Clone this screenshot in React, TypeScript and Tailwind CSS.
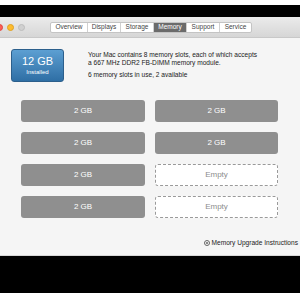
import React from "react";

const tabs = ["Overview", "Displays", "Storage", "Memory", "Support", "Service"];
const tabW = [36, 33, 33, 33, 33, 32];

function Slot({ filled }: { filled: boolean }) {
  return filled ? (
    <div className="h-[22px] rounded-[3px] bg-[#8f8f8f] flex items-center justify-center text-[8px] text-white">
      2 GB
    </div>
  ) : (
    <div className="h-[22px] rounded-[3px] bg-white border border-dashed border-[#9a9a9a] flex items-center justify-center text-[8px] text-[#8c8c8c]">
      Empty
    </div>
  );
}

export default function App() {
  const slots = [true, true, true, true, true, false, true, false];
  return (
    <div
      className="w-[300px] h-[300px] bg-white flex flex-col overflow-hidden"
      style={{ fontFamily: '"Liberation Sans", Arial, sans-serif' }}
    >
      <div className="h-[5px] bg-white" />
      <div className="h-[12px] bg-black" />
      <div className="h-[21px] bg-gradient-to-b from-[#ebebeb] to-[#d6d6d6] border-b border-[#c8c8c8] flex items-center">
        <div className="flex items-center gap-[4px] ml-[-4px]">
          <div className="w-[7px] h-[7px] rounded-full bg-[#fc5f57] border border-[#e1463f]" />
          <div className="w-[7px] h-[7px] rounded-full bg-[#fdbc2e] border border-[#dfa123]" />
          <div className="w-[7px] h-[7px] rounded-full bg-[#d0d0d0] border border-[#bdbdbd]" />
        </div>
        <div className="ml-[25px] flex h-[11px] rounded-[2px] border border-[#c4c4c4] bg-white overflow-hidden">
          {tabs.map((t, i) => (
            <div
              key={t}
              style={{ width: tabW[i] }}
              className={
                "flex items-center justify-center text-[6.5px] " +
                (t === "Memory"
                  ? "bg-[#6b6b6b] text-white"
                  : "text-[#444] ") +
                (i > 0 ? " border-l border-[#d0d0d0]" : "")
              }
            >
              {t}
            </div>
          ))}
        </div>
      </div>
      <div className="h-[218px] bg-[#f5f5f5] border-b border-[#d8d8d8] flex flex-col">
        <div className="flex mt-[11px] ml-[11px]">
          <div className="w-[53px] h-[33px] rounded-[3px] bg-gradient-to-b from-[#5c9fd2] to-[#2f6fa5] border border-[#2c5f8c] flex flex-col items-center justify-center text-white">
            <div className="text-[11px] leading-[12px]">12 GB</div>
            <div className="text-[6px] leading-[7px] mt-[2px]">Installed</div>
          </div>
          <div className="ml-[24px] mt-[2px] text-[6.6px] leading-[8px] text-[#222]">
            <div>Your Mac contains 8 memory slots, each of which accepts</div>
            <div>a 667 MHz DDR2 FB-DIMM memory module.</div>
            <div className="mt-[4px]">6 memory slots in use, 2 available</div>
          </div>
        </div>
        <div className="grid grid-cols-[124px_123px] gap-x-[10px] gap-y-[10px] ml-[21px] mt-[18px]">
          {slots.map((f, i) => (
            <Slot key={i} filled={f} />
          ))}
        </div>
        <div className="flex justify-end items-center mt-[20px] pr-[2px] text-[6.6px] text-[#222]">
          <div className="w-[6px] h-[6px] rounded-full border border-[#666] flex items-center justify-center mr-[2px]">
            <div className="w-[2px] h-[2px] rounded-full bg-[#666]" />
          </div>
          Memory Upgrade Instructions
        </div>
      </div>
      <div className="h-[37px] bg-black" />
      <div className="flex-1 bg-white" />
    </div>
  );
}
